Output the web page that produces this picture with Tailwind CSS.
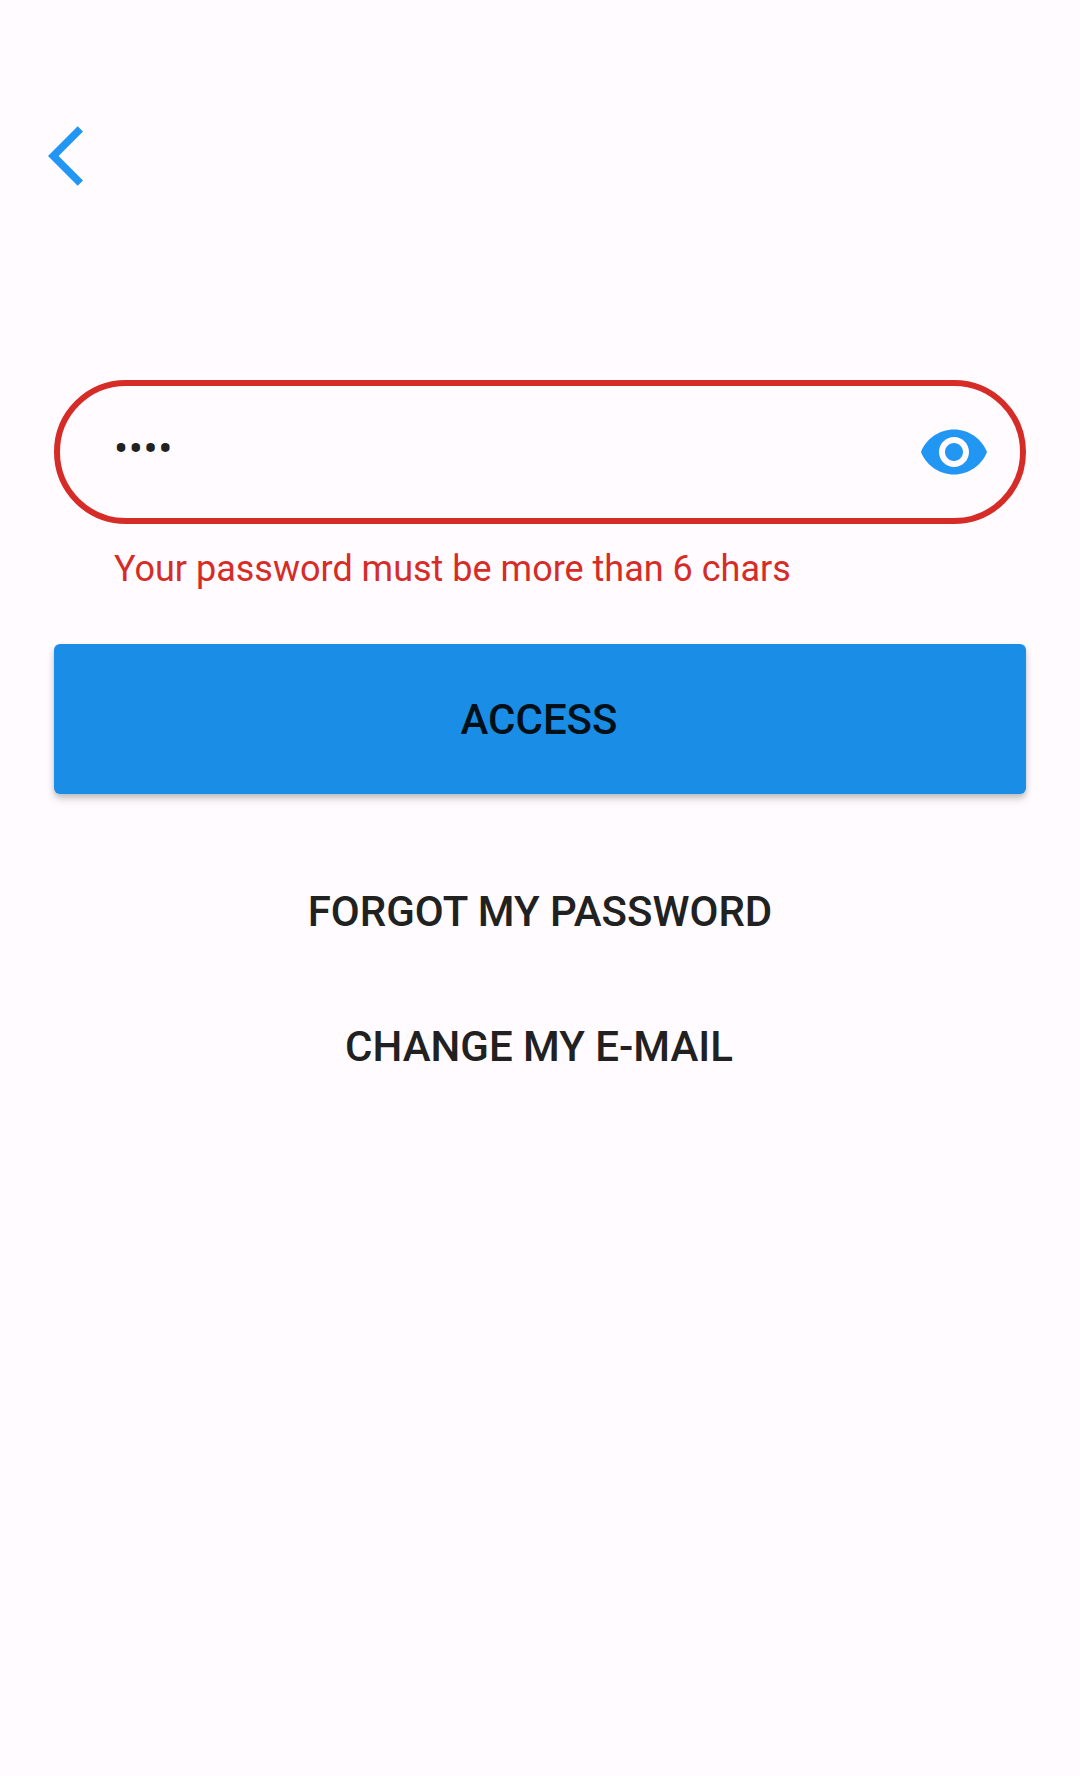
<!DOCTYPE html>
<html lang="en">
<head>
<meta charset="utf-8">
<title>Sign in</title>
<script src="https://cdn.jsdelivr.net/npm/@tailwindcss/browser@4"></script>
</head>
<body class="bg-[#fffbff]">
<main class="flex h-[1776px] w-[1080px] flex-col bg-[#fffbff] px-[54px] font-[Roboto,sans-serif] text-[#212121]">
  <header class="flex h-[380px] items-start pt-[120px]">
    <button aria-label="Back" class="-ml-[6px]">
      <svg class="block" width="36" height="72" viewBox="0 0 36 72" fill="#2196f3"><path d="M29.7 6.3 35 11.6 10.6 36 35 60.4 29.7 65.7 0 36Z"/></svg>
    </button>
  </header>
  <div class="flex h-36 items-center justify-between rounded-full border-6 border-[#d62c28] pr-[30px] pl-[54px]">
    <span class="pb-1.5 text-[42px] leading-[48px] tracking-[0.6px]">••••</span>
    <svg class="block" width="72" height="72" viewBox="0 0 24 24" fill="#2196f3"><path d="M12 4.5C7 4.500 2.730 7.610 1 12c1.730 4.390 6 7.500 11 7.500s9.270-3.110 11-7.500c-1.730-4.390-6-7.500-11-7.500zM12 17c-2.760 0-5-2.240-5-5s2.240-5 5-5 5 2.240 5 5-2.240 5-5 5zm0-8c-1.660 0-3 1.340-3 3s1.340 3 3 3 3-1.340 3-3-1.340-3-3-3z"/></svg>
  </div>
  <p class="h-[120px] pt-6 pl-[60px] text-[36px] leading-[42px] whitespace-nowrap text-[#d62c28]">Your password must be more than 6 chars</p>
  <button class="h-[150px] rounded-[6px] bg-[#1a8ee7] pr-[2px] text-[42px] font-medium text-[#001018] shadow-[0_5px_9px_rgba(0,0,0,0.16),0_3px_5px_rgba(0,0,0,0.12)]">ACCESS</button>
  <nav class="mt-[50px] flex flex-col">
    <button class="h-[135px] text-[42px] font-medium">FORGOT MY PASSWORD</button>
    <button class="h-[135px] pr-[2px] text-[42px] font-medium">CHANGE MY E-MAIL</button>
  </nav>
</main>
</body>
</html>
